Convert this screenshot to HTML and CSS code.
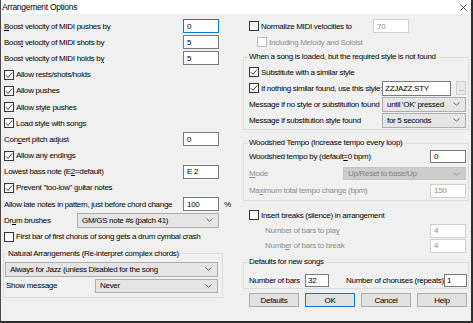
FILE: index.html
```html
<!DOCTYPE html>
<html>
<head>
<meta charset="utf-8">
<link rel="stylesheet" href="styles.css">
</head>
<body>
<div class="window">
  <div class="titlebar">
    <span class="title">Arrangement Options</span>
    <svg class="close" width="7" height="7" viewBox="0 0 7 7"><path d="M0.5 0.5L6.5 6.5M6.5 0.5L0.5 6.5" stroke="#333" stroke-width="0.9" fill="none"/></svg>
  </div>
  <div class="content">
    <div class="col left">
      <div class="row"><span class="lbl"><u>B</u>oost velocity of MIDI pushes by</span><span class="inp focus">0</span></div>
      <div class="row"><span class="lbl">Boos<u>t</u> velocity of MIDI shots by</span><span class="inp">5</span></div>
      <div class="row"><span class="lbl">Boost velocity of MIDI holds b<u>y</u></span><span class="inp">5</span></div>
      <div class="row"><span class="cb"><svg width="8" height="8" viewBox="0 0 8 8"><path d="M0.8 4.2L3 6.4L7.2 1.4" stroke="#222" stroke-width="0.9" fill="none"/></svg></span><span class="lbl">Allow rests/shots/holds</span></div>
      <div class="row"><span class="cb"><svg width="8" height="8" viewBox="0 0 8 8"><path d="M0.8 4.2L3 6.4L7.2 1.4" stroke="#222" stroke-width="0.9" fill="none"/></svg></span><span class="lbl">Allow pushes</span></div>
      <div class="row"><span class="cb"><svg width="8" height="8" viewBox="0 0 8 8"><path d="M0.8 4.2L3 6.4L7.2 1.4" stroke="#222" stroke-width="0.9" fill="none"/></svg></span><span class="lbl">Allow style pushes</span></div>
      <div class="row"><span class="cb"><svg width="8" height="8" viewBox="0 0 8 8"><path d="M0.8 4.2L3 6.4L7.2 1.4" stroke="#222" stroke-width="0.9" fill="none"/></svg></span><span class="lbl">Load style with songs</span></div>
      <div class="row"><span class="lbl">Con<u>c</u>ert pitch adjust</span><span class="inp">0</span></div>
      <div class="row"><span class="cb"><svg width="8" height="8" viewBox="0 0 8 8"><path d="M0.8 4.2L3 6.4L7.2 1.4" stroke="#222" stroke-width="0.9" fill="none"/></svg></span><span class="lbl">Allow any endings</span></div>
      <div class="row"><span class="lbl">Lowest bass note (E<u>2</u>=default)</span><span class="inp">E 2</span></div>
      <div class="row"><span class="cb"><svg width="8" height="8" viewBox="0 0 8 8"><path d="M0.8 4.2L3 6.4L7.2 1.4" stroke="#222" stroke-width="0.9" fill="none"/></svg></span><span class="lbl">Prevent "too-low" guitar notes</span></div>
      <div class="row pctrow"><span class="lbl">Allow late notes in pattern, just before chord change</span><span class="inp">100</span><span class="pct">%</span></div>
      <div class="row"><span class="lbl">Dr<u>u</u>m brushes</span><span class="sel drum"><span>GM/GS note #s (patch 41)</span><svg class="chev" width="7" height="4" viewBox="0 0 7 4"><path d="M0.5 0.5L3.5 3.3L6.5 0.5" stroke="#555" stroke-width="0.9" fill="none"/></svg></span></div>
      <div class="row"><span class="cb"></span><span class="lbl">First bar of first chorus of song gets a drum cymbal crash</span></div>
      <fieldset class="group natural">
        <legend>Natural Arrangements (Re-interpret complex chords)</legend>
        <span class="sel wide"><span>Always for Jazz (unless Disabled for the song</span><svg class="chev" width="7" height="4" viewBox="0 0 7 4"><path d="M0.5 0.5L3.5 3.3L6.5 0.5" stroke="#555" stroke-width="0.9" fill="none"/></svg></span>
        <div class="showrow"><span class="showlbl">Show message</span><span class="sel show"><span>Never</span><svg class="chev" width="7" height="4" viewBox="0 0 7 4"><path d="M0.5 0.5L3.5 3.3L6.5 0.5" stroke="#555" stroke-width="0.9" fill="none"/></svg></span></div>
      </fieldset>
    </div>

    <div class="col right">
      <div class="row"><span class="cb"></span><span class="normlbl">Normalize MIDI velocities to</span><span class="inp dis">70</span></div>
      <div class="row indent"><span class="cb dis"></span><span class="lbl disabled">Including Melody and Soloist</span></div>
      <fieldset class="group g1">
        <legend>When a song is loaded, but the required style is not found</legend>
        <div class="row"><span class="cb"><svg width="8" height="8" viewBox="0 0 8 8"><path d="M0.8 4.2L3 6.4L7.2 1.4" stroke="#222" stroke-width="0.9" fill="none"/></svg></span><span class="lbl">Substitute with a similar style</span></div>
        <div class="row"><span class="cb"><svg width="8" height="8" viewBox="0 0 8 8"><path d="M0.8 4.2L3 6.4L7.2 1.4" stroke="#222" stroke-width="0.9" fill="none"/></svg></span><span class="lbl">If nothing similar found, use this style:</span><span class="inp style">ZZJAZZ.STY</span><span class="dots">...</span></div>
        <div class="row"><span class="lbl">Message if no style or substitution found</span><span class="sel msg"><span>until 'OK' pressed</span><svg class="chev" width="7" height="4" viewBox="0 0 7 4"><path d="M0.5 0.5L3.5 3.3L6.5 0.5" stroke="#555" stroke-width="0.9" fill="none"/></svg></span></div>
        <div class="row"><span class="lbl">Message if substitution style found</span><span class="sel msg"><span>for 5 seconds</span><svg class="chev" width="7" height="4" viewBox="0 0 7 4"><path d="M0.5 0.5L3.5 3.3L6.5 0.5" stroke="#555" stroke-width="0.9" fill="none"/></svg></span></div>
      </fieldset>
      <fieldset class="group g2">
        <legend>Woodshed Tempo (Increase tempo every loop)</legend>
        <div class="row"><span class="lbl">Woodshed tempo by (default<u>=</u>0 bpm)</span><span class="inp small">0</span></div>
        <div class="row"><span class="lbl disabled"><u>M</u>ode</span><span class="sel mode"><span>Up/Reset to base/Up</span><svg class="chev" width="7" height="4" viewBox="0 0 7 4"><path d="M0.5 0.5L3.5 3.3L6.5 0.5" stroke="#999" stroke-width="0.9" fill="none"/></svg></span></div>
        <div class="row"><span class="lbl disabled">Ma<u>x</u>imum total tempo change (bpm)</span><span class="inp dis">150</span></div>
      </fieldset>
      <div class="row insert"><span class="cb"></span><span class="lbl">Insert breaks (silence) in arrangement</span></div>
      <div class="row sub"><span class="lbl disabled">Number of bars to pla<u>y</u></span><span class="inp dis">4</span></div>
      <div class="row sub"><span class="lbl disabled">Numb<u>e</u>r of bars to break</span><span class="inp dis">4</span></div>
      <fieldset class="group g3">
        <legend>Defaults for new songs</legend>
        <div class="row"><span class="barslbl">Number of bars</span><span class="inp bars">32</span><span class="lbl chor">Number of choruses (repeats)</span><span class="inp chorin">1</span></div>
      </fieldset>
      <div class="buttons">
        <span class="btn">Defaults</span>
        <span class="btn ok">OK</span>
        <span class="btn">Cancel</span>
        <span class="btn">Help</span>
      </div>
    </div>
  </div>
</div>
</body>
</html>
```

FILE: styles.css
```css
* { box-sizing: border-box; }
html, body { margin: 0; padding: 0; }
body {
  font-family: "Liberation Sans", Arial, sans-serif;
  font-size: 8px;
  letter-spacing: -0.3px;
  color: #000;
  background: #fff;
}
u { text-decoration-thickness: 1px; text-underline-offset: 1px; }

.window {
  width: 473px;
  height: 323px;
  display: flex;
  flex-direction: column;
  background: #f0f0f0;
  border-left: 1px solid #4a4a4a;
  border-right: 2px solid #2e2e2e;
  border-bottom: 2px solid #2e2e2e;
}
.titlebar {
  height: 14px;
  flex: none;
  background: #fff;
  display: flex;
  align-items: center;
  justify-content: space-between;
  padding: 0 4px 0 1px;
}
.title { font-size: 8.5px; }
.close { display: block; }

.content {
  flex: 1;
  display: flex;
  padding: 4px 0 0 2px;
}
.col { display: flex; flex-direction: column; }
.left { width: 229px; }
.right { width: 226px; margin-left: 11px; }

.row {
  display: flex;
  align-items: center;
  white-space: nowrap;
}
.left .row { height: 16.2px; padding: 0 13px 0 1px; }
.left .pctrow { padding-right: 0; }
.right .row { height: 16px; padding: 0 3px 0 6px; }

.lbl { flex: 1; white-space: nowrap; }
.disabled { color: #8d8d8d; }

.cb {
  width: 10px;
  height: 10px;
  flex: none;
  border: 1px solid #333;
  background: #fff;
  margin-right: 2px;
  display: flex;
  align-items: center;
  justify-content: center;
}
.cb svg { display: block; }
.cb.dis { border-color: #bcbcbc; }

.inp {
  flex: none;
  width: 36px;
  height: 14px;
  border: 1px solid #7a7a7a;
  background: #fff;
  padding: 0 3px;
  display: flex;
  align-items: center;
}
.inp.focus { border-color: #0078d7; }
.inp.dis { border-color: #cfcfcf; color: #8d8d8d; }
.pct { width: 13px; padding-left: 5px; flex: none; }

.sel {
  flex: none;
  height: 15px;
  border: 1px solid #adadad;
  background: #e5e5e5;
  display: flex;
  align-items: center;
  justify-content: space-between;
  padding: 0 5px 0 4px;
}
.chev { display: block; flex: none; }
.sel.drum { width: 142px; }

.group {
  margin: 0;
  border: 1px solid #dcdcdc;
  min-width: 0;
}
.group legend {
  line-height: 10px;
  padding: 0 1px;
}

.natural {
  width: 220px;
  margin-top: 4px;
  padding: 3px 3px 4px 1px;
}
.natural legend { margin-left: 2px; }
.sel.wide { width: 213px; }
.showrow {
  display: flex;
  align-items: center;
  margin-top: 2px;
}
.showlbl { width: 90px; padding-left: 1px; flex: none; }
.sel.show { width: 123px; height: 14px; }

.right .indent { padding-left: 14px; }
.normlbl { width: 112px; flex: none; }

.right .group { width: 226px; }
.right .group legend { margin-left: 4px; }
.right .group .row { padding: 0 2px 0 5px; }

.g1 { margin-top: 2px; padding: 2px 0 1px 0; }
.inp.style { width: 69px; height: 15px; padding-left: 2px; }
.dots {
  width: 10px;
  height: 14px;
  flex: none;
  margin-left: 5px;
  border: 1px solid #cfcfcf;
  background: #e8e8e8;
  color: #777;
  font-size: 7px;
  display: flex;
  align-items: flex-end;
  justify-content: center;
  padding-bottom: 2px;
}
.sel.msg { width: 84px; height: 15px; }

.g2 { margin-top: 8px; padding: 0 0 1px 0; }
.right .g2 .row { height: 17px; }
.inp.small { height: 13px; }
.sel.mode {
  width: 123px;
  height: 13px;
  background: #cccccc;
  border-color: #c4c4c4;
  color: #838383;
}

.right .insert { margin-top: 6px; }
.right .sub { height: 15px; padding-left: 22px; }

.g3 { margin-top: 4px; padding: 5px 0 0 0; }
.barslbl { width: 56px; flex: none; }
.inp.bars { width: 24px; height: 13px; padding-left: 2px; }
.chor { margin-left: 17px; }
.inp.chorin { width: 23px; height: 13px; padding-left: 2px; }

.buttons {
  display: flex;
  gap: 6px;
  margin-top: 4px;
  padding-left: 6px;
}
.btn {
  width: 50px;
  height: 14px;
  border: 1px solid #adadad;
  background: #e1e1e1;
  display: flex;
  align-items: center;
  justify-content: center;
}
.btn.ok { border-color: #0078d7; }
```
